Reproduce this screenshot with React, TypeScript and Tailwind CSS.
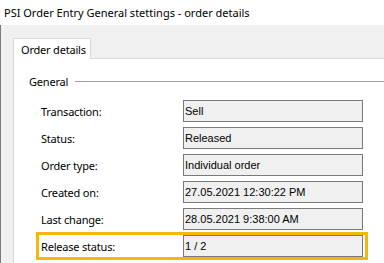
export default function App() {
  const rows: [string, string][] = [
    ["Transaction:", "Sell"],
    ["Status:", "Released"],
    ["Order type:", "Individual order"],
    ["Created on:", "27.05.2021 12:30:22 PM"],
    ["Last change:", "28.05.2021 9:38:00 AM"],
  ];
  const ui = { fontFamily: '"Noto Sans", "Open Sans", sans-serif' };
  const fld = { fontFamily: '"Liberation Sans", Arial, sans-serif' };
  return (
    <div className="w-[384px] h-[263px] bg-white overflow-hidden flex flex-col text-black" style={ui}>
      <div className="h-[25px] shrink-0 flex items-center pl-[4px] text-[11px] leading-none">
        PSI Order Entry General stettings - order details
      </div>
      <div className="flex-1 bg-[#f0f0f0] border-l border-[#7a7a7a] pl-[12px] pt-[13px] flex flex-col">
        <div className="w-[78px] h-[21px] bg-white border border-b-0 border-[#d9d9d9] flex items-center pl-[7px] text-[11px] tracking-[-0.2px] leading-none relative z-10">
          Order details
        </div>
        <div className="flex-1 bg-white border-t border-l border-[#d9d9d9] -mt-px">
          <div className="flex items-center h-[14px] mt-[15px] pl-[15px]">
            <span className="text-[11px] tracking-[-0.2px] leading-none">General</span>
            <div className="flex-1 h-px bg-[#a0a0a0] ml-[7px]"></div>
          </div>
          <div className="ml-[22px] mt-[12px] flex flex-col gap-[5px]">
            {rows.map(([l, v]) => (
              <div key={l} className="flex items-center pl-[5px]">
                <div className="w-[142px] text-[11px] tracking-[-0.2px] leading-none">{l}</div>
                <div className="w-[180px] h-[22px] bg-[#f0f0f0] border border-[#7a7a7a] flex items-center pl-[1px] text-[11px] leading-none" style={fld}>
                  {v}
                </div>
              </div>
            ))}
            <div className="flex items-center border-[3px] border-[#f6b60e] pl-[2px] pr-[2px] -mt-[3px] w-[332px]">
              <div className="w-[142px] text-[11px] tracking-[-0.2px] leading-none">Release status:</div>
              <div className="w-[180px] h-[22px] bg-[#f0f0f0] border border-[#7a7a7a] flex items-center pl-[1px] text-[11px] leading-none" style={fld}>
                1 / 2
              </div>
            </div>
          </div>
        </div>
      </div>
    </div>
  );
}
